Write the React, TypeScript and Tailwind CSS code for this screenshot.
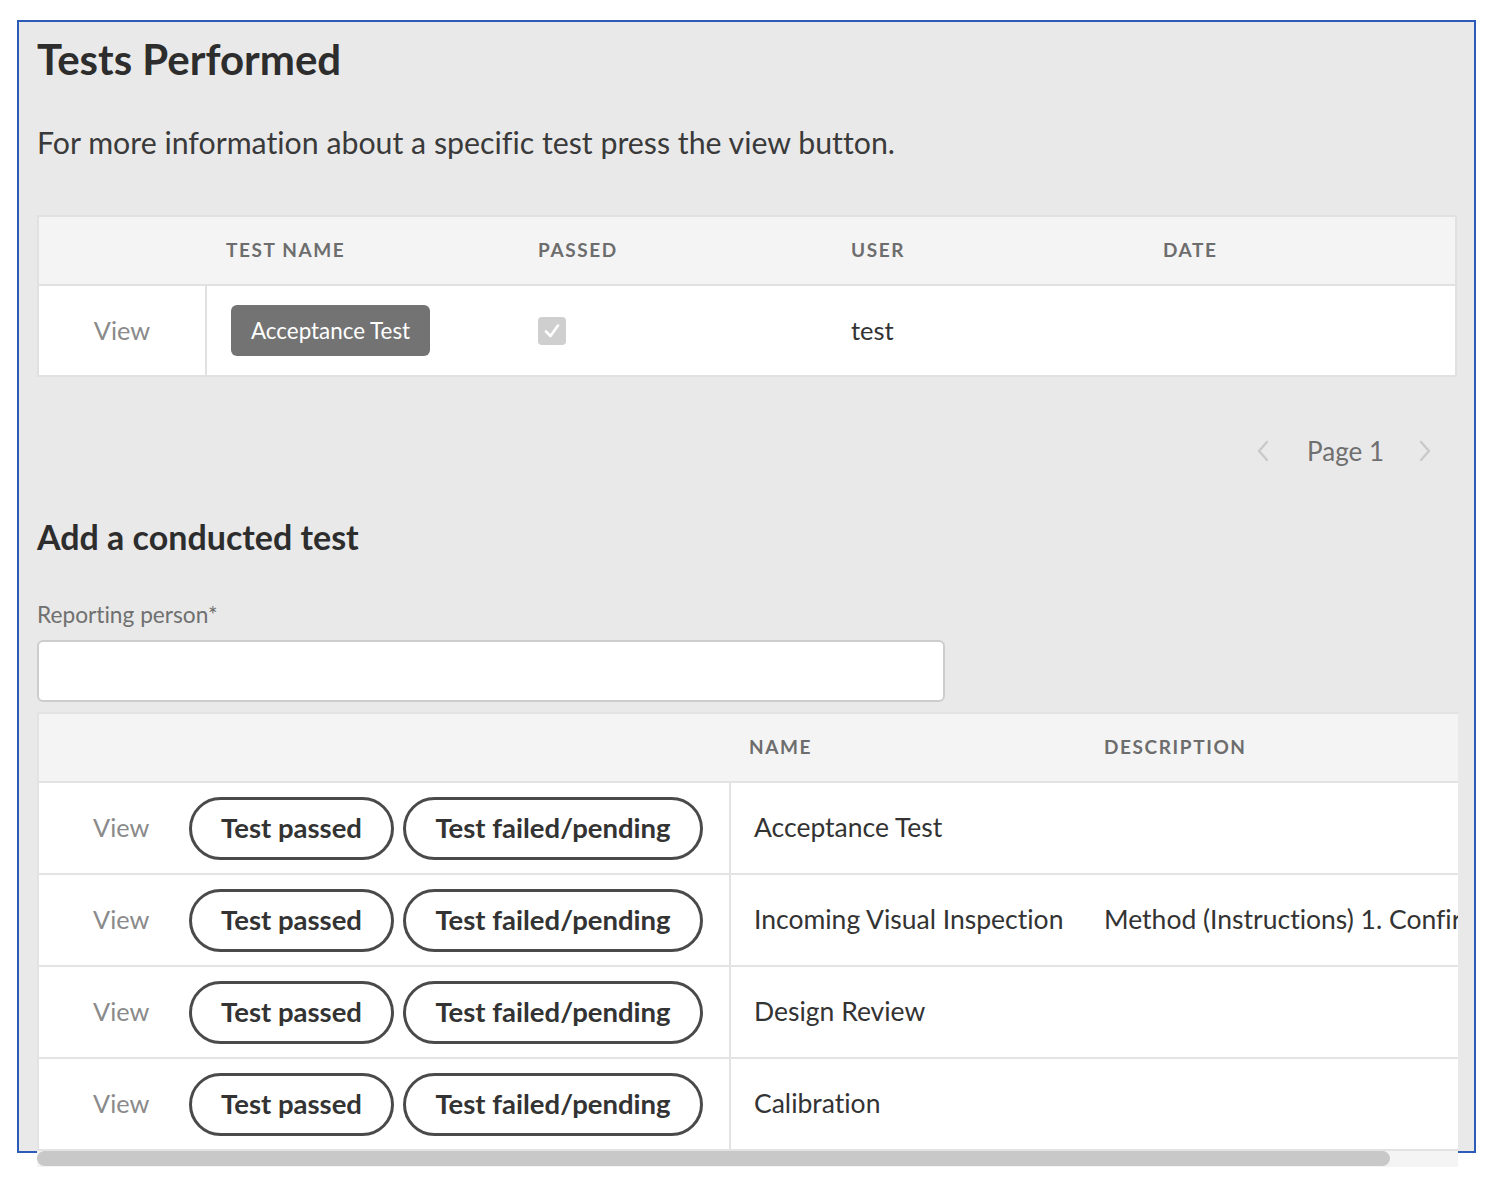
import React from "react";

const font = { fontFamily: "Lato, 'Open Sans', sans-serif" };

function Check() {
  return (
    <div className="w-[28px] h-[28px] rounded-[4px] bg-[#cfcfcf] flex items-center justify-center">
      <svg width="20" height="20" viewBox="0 0 20 20" fill="none">
        <polyline points="4,10.5 8.5,15 16,4.5" stroke="#ffffff" strokeWidth="2.6" strokeLinecap="round" strokeLinejoin="round" />
      </svg>
    </div>
  );
}

function Chevron({ dir }: { dir: "left" | "right" }) {
  return (
    <svg width="14" height="22" viewBox="0 0 14 22" fill="none">
      {dir === "left" ? (
        <polyline points="11,2 3,11 11,20" stroke="#c9c9c9" strokeWidth="2.4" strokeLinecap="round" strokeLinejoin="round" />
      ) : (
        <polyline points="3,2 11,11 3,20" stroke="#c9c9c9" strokeWidth="2.4" strokeLinecap="round" strokeLinejoin="round" />
      )}
    </svg>
  );
}

const rows = [
  { name: "Acceptance Test", desc: "" },
  { name: "Incoming Visual Inspection", desc: "Method (Instructions) 1. Confirm that the delivered items match the order and the delivery note" },
  { name: "Design Review", desc: "" },
  { name: "Calibration", desc: "" },
];

export default function App() {
  return (
    <div style={font} className="w-[1496px] min-h-[1190px] bg-white pt-[20px] pl-[17px] [font-variant-ligatures:none]">
      <div className="w-[1459px] h-[1133px] border-2 border-[#2c5cb8] bg-[#e9e9e9] pl-[18px] pr-[17px] pt-[11px]">
        <h1 className="text-[42px] leading-[52px] font-bold text-[#2d2d2d]">Tests Performed</h1>
        <p className="mt-[39px] text-[30.3px] leading-[36px] text-[#3a3a3a]">
          For more information about a specific test press the view button.
        </p>

        {/* Table 1 */}
        <div className="mt-[55px] w-[1420px] border-2 border-[#e1e1e1] bg-white">
          <div className="grid grid-cols-[168px_311px_313px_312px_1fr] h-[69px] bg-[#f4f4f4] border-b-2 border-[#e1e1e1] items-center text-[19px] font-bold tracking-[1.6px] text-[#6d6d6d]">
            <div />
            <div className="pl-[19px]">TEST NAME</div>
            <div className="pl-[20px]">PASSED</div>
            <div className="pl-[20px]">USER</div>
            <div className="pl-[20px]">DATE</div>
          </div>
          <div className="grid grid-cols-[168px_311px_313px_312px_1fr] h-[89px] items-stretch">
            <div className="border-r-2 border-[#e1e1e1] flex items-center justify-center text-[25.3px] text-[#8a8a8a]">View</div>
            <div className="pl-[24px] flex items-center">
              <span className="h-[51px] px-[20px] rounded-[6px] bg-[#737373] text-white text-[22.4px] flex items-center">Acceptance Test</span>
            </div>
            <div className="pl-[20px] flex items-center"><Check /></div>
            <div className="pl-[20px] flex items-center text-[25.5px] text-[#333]">test</div>
            <div />
          </div>
        </div>

        {/* Pagination */}
        <div className="mt-[56px] h-[36px] flex items-center justify-end pr-[25px]">
          <Chevron dir="left" />
          <span className="ml-[37px] mr-[34px] text-[26px] leading-[36px] text-[#6f6f6f]">Page 1</span>
          <Chevron dir="right" />
        </div>

        <h2 className="mt-[47px] text-[34px] leading-[42px] font-bold text-[#2d2d2d]">Add a conducted test</h2>
        <div className="mt-[43px] text-[22.7px] leading-[28px] text-[#707070]">Reporting person*</div>
        <div className="mt-[11px] w-[908px] h-[62px] rounded-[6px] border-2 border-[#cdcdcd] bg-white" />

        {/* Table 2 */}
        <div className="mt-[10px] w-[1421px] overflow-hidden">
          <div className="w-[2200px] border-l-2 border-t-2 border-[#e3e3e3] bg-white">
            <div className="grid grid-cols-[692px_353px_1fr] h-[69px] bg-[#f4f4f4] border-b-2 border-[#e3e3e3] items-center text-[19px] font-bold tracking-[1.6px] text-[#6d6d6d]">
              <div />
              <div className="pl-[18px]">NAME</div>
              <div className="pl-[20px]">DESCRIPTION</div>
            </div>
            {rows.map((r) => (
              <div key={r.name} className="grid grid-cols-[692px_353px_1fr] h-[92px] border-b-2 border-[#e3e3e3]">
                <div className="border-r-2 border-[#e3e3e3] flex items-center pl-[54px]">
                  <span className="w-[56px] text-center text-[25.3px] text-[#8a8a8a]">View</span>
                  <span className="ml-[40px] w-[205px] h-[63px] rounded-full border-[3px] border-[#4a4a4a] flex items-center justify-center text-[27.5px] font-bold text-[#333]">Test passed</span>
                  <span className="ml-[9px] w-[300px] h-[63px] rounded-full border-[3px] border-[#4a4a4a] flex items-center justify-center text-[27.5px] font-bold text-[#333]">Test failed/pending</span>
                </div>
                <div className="pl-[23px] flex items-center text-[26.5px] text-[#333] whitespace-nowrap">{r.name}</div>
                <div className="pl-[20px] flex items-center text-[26.5px] text-[#333] whitespace-nowrap">{r.desc}</div>
              </div>
            ))}
          </div>
        </div>
        <div className="w-[1421px] h-[16px] bg-[#f4f4f4]">
          <div className="w-[1353px] h-[15px] rounded-full bg-[#c8c8c8]" />
        </div>
      </div>
    </div>
  );
}
